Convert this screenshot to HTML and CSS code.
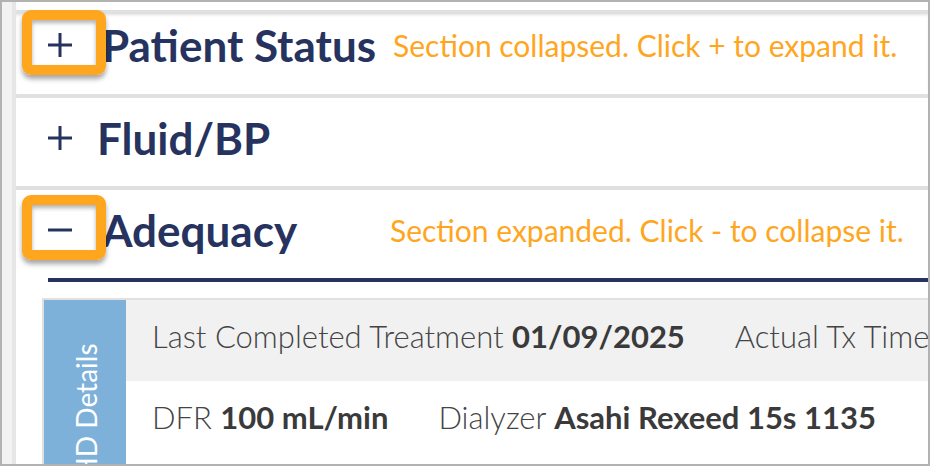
FILE: index.html
```html
<!DOCTYPE html>
<html lang="en">
<head>
    <meta charset="UTF-8">
    <title>Treatment sections</title>
    <link rel="stylesheet" href="styles.css">
</head>
<body>
    <div class="frame">
        <div class="gutter"></div>
        <div class="main">
            <div class="section first">
                <div class="section-head">
                    <span class="toggle highlighted">
                        <svg viewBox="0 0 24 24" width="24" height="24"><path d="M12 0v24M0 12h24"/></svg>
                    </span>
                    <h2>Patient Status</h2>
                    <span class="hint">Section collapsed. Click + to expand it.</span>
                </div>
            </div>

            <div class="section">
                <div class="section-head">
                    <span class="toggle">
                        <svg viewBox="0 0 24 24" width="24" height="24"><path d="M12 0v24M0 12h24"/></svg>
                    </span>
                    <h2>Fluid/BP</h2>
                </div>
            </div>

            <div class="section open">
                <div class="section-head">
                    <span class="toggle highlighted">
                        <svg viewBox="0 0 24 24" width="24" height="24"><path d="M0 12h24"/></svg>
                    </span>
                    <h2>Adequacy</h2>
                    <span class="hint">Section expanded. Click - to collapse it.</span>
                </div>
                <div class="details">
                    <div class="details-tab"><span>HD Details</span></div>
                    <div class="details-rows">
                        <div class="row shaded">
                            <span>Last Completed Treatment <b>01/09/2025</b></span>
                            <span>Actual Tx Time</span>
                        </div>
                        <div class="row">
                            <span>DFR <b>100 mL/min</b></span>
                            <span>Dialyzer <b>Asahi Rexeed 15s 1135</b></span>
                        </div>
                    </div>
                </div>
            </div>
        </div>
    </div>
</body>
</html>
```

FILE: styles.css
```css
/* Page frame */
body {
    margin: 0;
    font-family: Lato, "Open Sans", sans-serif;
    background-color: #ffffff;
}
.frame {
    display: flex;
    height: 466px;
    box-sizing: border-box;
    border: 2px solid #b2b2b2;
    overflow: hidden;
}
.gutter {
    width: 10px;
    flex-shrink: 0;
    background-color: #f2f2f2;
    border-right: 4px solid #e6e6e6;
}
.main {
    flex: 1;
    min-width: 0;
    padding-top: 8px;
}
/* Sections */
.section {
    border-top: 4px solid #e0e0e0;
}
.section.first {
    box-shadow: inset 0 2px 3px -1px rgba(0, 0, 0, 0.12);
}
.section-head {
    display: flex;
    align-items: center;
    height: 88px;
    box-sizing: border-box;
    padding-bottom: 9px;
    white-space: nowrap;
}
.section.first .section-head {
    height: 80px;
    padding-bottom: 18px;
}
.section.open .section-head {
    margin-left: 32px;
    padding-bottom: 8px;
    border-bottom: 4px solid #27335f;
    height: 92px;
}
.section.open .toggle {
    margin-left: 0;
}
.section-head h2 {
    margin: 0;
    font-size: 44px;
    font-weight: 700;
    color: #27335f;
    line-height: 1;
}
.toggle {
    position: relative;
    display: flex;
    width: 24px;
    height: 24px;
    margin: 0 25px 0 32px;
    flex-shrink: 0;
}
.toggle svg {
    stroke: #27335f;
    stroke-width: 3;
    fill: none;
}
.toggle.highlighted {
    margin-right: 30px;
}
.toggle.highlighted + h2 {
    min-width: 271px;
}
/* Orange annotation box */
.toggle.highlighted::before {
    content: "";
    position: absolute;
    left: -26px;
    top: -23px;
    width: 84px;
    height: 65px;
    box-sizing: border-box;
    border: 10px solid #ffa61f;
    border-radius: 9px;
    box-shadow: 0 4px 5px rgba(0, 0, 0, 0.35), inset 0 3px 4px rgba(0, 0, 0, 0.3);
}
.hint {
    margin-left: 17px;
    font-size: 30px;
    color: #ffa61f;
}
/* Expanded content */
.details {
    display: flex;
    margin: 16px 0 0 26px;
    border-top: 2px solid #e0e0e0;
    border-left: 2px solid #e0e0e0;
    height: 222px;
}
.details-tab {
    width: 82px;
    flex-shrink: 0;
    background-color: #7db1d9;
    position: relative;
}
.details-tab span {
    position: absolute;
    left: calc(50% + 1px);
    top: 50%;
    transform: translate(-50%, -50%) rotate(-90deg);
    color: #ffffff;
    font-size: 28px;
    white-space: nowrap;
}
.details-rows {
    flex: 1;
    min-width: 0;
}
.row {
    display: flex;
    gap: 50px;
    align-items: flex-start;
    height: 81px;
    box-sizing: border-box;
    padding: 17px 0 0 26px;
    white-space: nowrap;
    font-size: 31px;
    font-weight: 300;
    color: #444444;
}
.row.shaded {
    background-color: #f1f1f1;
}
.row b {
    font-weight: 700;
    color: #3a3a3a;
}
```
